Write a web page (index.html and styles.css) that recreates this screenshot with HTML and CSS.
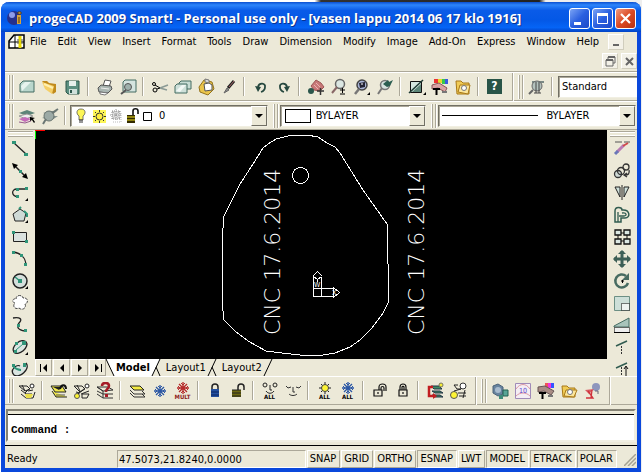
FILE: index.html
```html
<!DOCTYPE html>
<html lang="en">
<head>
    <meta charset="UTF-8">
    <meta name="viewport" content="width=device-width, initial-scale=1.0">
    <title>progeCAD 2009 Smart!</title>
    <link rel="stylesheet" href="styles.css">
</head>
<body>

<div class="window">
    <header class="titlebar">
        <svg class="app-icon" width="16" height="16"><circle cx="7" cy="8" r="7" fill="#26308c"/><circle cx="5" cy="5" r="3" fill="#8d9be8"/><path d="M10 5h4v9h-4z" fill="#d8a43a"/><path d="M11 2h3v2h-3zM12 7v6" stroke="#5b3a12" fill="#f4d27a"/></svg>
        <h1>progeCAD 2009 Smart! - Personal use only - [vasen lappu 2014 06 17 klo 1916]</h1>
        <div class="win-buttons">
            <button class="win-btn" aria-label="Minimize"><svg width="19" height="19"><path d="M4 13h7v3H4z" fill="#fff"/></svg></button>
            <button class="win-btn" aria-label="Maximize"><svg width="19" height="19"><path d="M4.500 5v9.500h10V5M4 5h11" fill="none" stroke="#fff"/><path d="M4 4h11v3H4z" fill="#fff"/></svg></button>
            <button class="win-btn win-close" aria-label="Close"><svg width="19" height="19"><path d="M5 5l9 9M14 5l-9 9" stroke="#fff" stroke-width="2.200"/></svg></button>
        </div>
    </header>

    <nav class="menubar">
        <div class="menu-row">
            <svg class="doc-icon" width="17" height="17"><path d="M1 15V8l5-6h10v13z" fill="#fff" stroke="#000" stroke-width="1.500"/><path d="M1 9h15M7 2v13" stroke="#000"/><path d="M12 3v12" stroke="#e8d800" stroke-width="3"/><path d="M10 6v5M14 6v5" stroke="#555"/></svg>
            <button>File</button>
            <button>Edit</button>
            <button>View</button>
            <button>Insert</button>
            <button>Format</button>
            <button>Tools</button>
            <button>Draw</button>
            <button>Dimension</button>
            <button>Modify</button>
            <button>Image</button>
            <button>Add-On</button>
            <button>Express</button>
            <button>Window</button>
            <button>Help</button>
            <button class="mdi" aria-label="Minimize drawing"><svg width="14" height="14"><path d="M4 9h6v2H4z" fill="#666"/></svg></button>
        </div>
        <div class="menu-row mdi-row">
            <button class="mdi" aria-label="Restore drawing"><svg width="14" height="14"><path d="M5 5V3h7v6h-2M3 6h7v6H3z" fill="none" stroke="#666"/><path d="M3 5h7v2H3zM5 2h7v2H5z" fill="#666"/></svg></button>
            <button class="mdi" aria-label="Close drawing"><svg width="14" height="14"><path d="M4 4l7 7M11 4l-7 7" stroke="#666" stroke-width="2"/></svg></button>
        </div>
    </nav>

    <!-- standard toolbar -->
    <div class="toolbar">
        <i class="grip"></i>
        <button class="tool" aria-label="New"><svg width="18" height="18"><path d="M2 14V6l3-3h11v11z" fill="#b9d6cc" stroke="#456c62"/><path d="M3 8l4-4h6L4 13z" fill="#e7f3ee"/></svg></button>
        <button class="tool" aria-label="Open"><svg width="18" height="18"><path d="M1 3h5l2 2 7 1v8l-3 2z" fill="#c08a1c"/><path d="M1 4l12 4-2 8L4 11z" fill="#f5cf67"/><path d="M3 6l9 4" stroke="#fff0b0" stroke-width="2"/></svg></button>
        <button class="tool" aria-label="Save"><svg width="18" height="18"><path d="M2 3h13v13H4l-2-2z" fill="#5b8f80" stroke="#2c574b"/><path d="M5 3h7v5H5z" fill="#e6efeb"/><path d="M5 11h8v5H5z" fill="#cfe0da"/><path d="M7 12v3" stroke="#2c574b" stroke-width="2"/></svg></button>
        <i class="sep"></i>
        <button class="tool" aria-label="Print"><svg width="18" height="18"><path d="M7 8l2-6 6 1-2 6z" fill="#fff" stroke="#555"/><path d="M2 10l3-3 10 1 1 3-4 4-9-1z" fill="#a9b5b1" stroke="#555"/><path d="M4 14l8 1-3 2-5-1z" fill="#fff" stroke="#777"/><path d="M5 10l8 1" stroke="#eee"/></svg></button>
        <button class="tool" aria-label="Print preview"><svg width="18" height="18"><path d="M4 13V4l2-2h11v12H4" fill="#d5e4df" stroke="#456c62"/><circle cx="9" cy="9" r="3.500" fill="#9fb1ac" stroke="#555"/><path d="M7 12l-5 4" stroke="#555" stroke-width="2"/></svg></button>
        <i class="sep"></i>
        <button class="tool" aria-label="Cut"><svg width="18" height="18" fill="none" stroke="#000"><circle cx="3" cy="6" r="1.500"/><circle cx="4" cy="12" r="2"/><path d="M4 7l5 3M6 11l3-1"/><path d="M9 10l8-3M9 10l7 2" stroke="#8b9a95" stroke-width="1.500"/></svg></button>
        <button class="tool" aria-label="Copy"><svg width="18" height="18"><path d="M5 11V5l2-2h10v8z" fill="#c7dcd4" stroke="#456c62"/><path d="M1 15V8l2-2h10v9z" fill="#cfe1da" stroke="#456c62"/><path d="M2 13l6-6h4l-6 7z" fill="#f2f8f5"/></svg></button>
        <button class="tool" aria-label="Paste"><svg width="18" height="18"><path d="M7 2l8 2 2 7-6 6-8-3-1-5z" fill="#eac44a" stroke="#94731c"/><path d="M7 6l5-1 3 2v5l-7 1z" fill="#fff" stroke="#555"/><path d="M8 1l4 1v3L8 4z" fill="#ddd" stroke="#777"/></svg></button>
        <button class="tool" aria-label="Match properties"><svg width="18" height="18"><path d="M4 15l3-5 2 2z" fill="#888" stroke="#666"/><path d="M8 10l6-7" stroke="#222" stroke-width="3"/><path d="M9 9l5-6" stroke="#a96a6a"/></svg></button>
        <i class="sep"></i>
        <button class="tool" aria-label="Undo"><svg width="18" height="18"><path d="M6 9c1-5 8-4 7 0 0 2-1 4-4 5" fill="none" stroke="#26483f" stroke-width="1.800"/><path d="M3 8l6 1-3 5z" fill="#26483f"/></svg></button>
        <button class="tool" aria-label="Redo"><svg width="18" height="18"><path d="M12 9c-1-5-8-4-7 0 0 2 1 4 4 5" fill="none" stroke="#26483f" stroke-width="1.800"/><path d="M15 8l-6 1 3 5z" fill="#26483f"/></svg></button>
        <i class="sep"></i>
        <button class="tool" aria-label="Pan"><svg width="18" height="18"><path d="M4 8l5-6 5 3 3 4-4 4-6-1z" fill="#c87878" stroke="#9c5555"/><path d="M9 5l4 4M7 7l4 4" stroke="#ecb0b0"/><circle cx="4" cy="13" r="3" fill="#2b564b"/><path d="M10 13h7M13.500 10v7" stroke="#333" stroke-width="1.500"/></svg></button>
        <button class="tool" aria-label="Zoom in and out"><svg width="18" height="18"><circle cx="10" cy="6" r="4.500" fill="#dbe6e2" stroke="#666" stroke-width="1.500"/><path d="M7 9l-5 6" stroke="#866" stroke-width="2"/><path d="M10 12h5M12.500 10v5M10 16h5" stroke="#000"/></svg></button>
        <button class="tool" aria-label="Zoom window"><svg width="18" height="18"><circle cx="9" cy="7" r="5" fill="#aab6d8" stroke="#444" stroke-width="1.500"/><path d="M6 5l6-1v5l-5 1z" fill="#223"/><path d="M8 6h2" stroke="#fff"/><path d="M6 11l-4 5" stroke="#777" stroke-width="2.500"/><path d="M17 14v3h-3z"/></svg></button>
        <button class="tool" aria-label="Zoom previous"><svg width="18" height="18"><circle cx="9" cy="7" r="4.500" fill="#d7e3df" stroke="#777" stroke-width="1.500"/><path d="M6 10l-4 6" stroke="#777" stroke-width="2"/><path d="M7 6l5-4 1 2 4-2-3 6-3 1z" fill="#2b5e50"/></svg></button>
        <i class="sep"></i>
        <button class="tool" aria-label="Redraw"><svg width="18" height="18"><path d="M2.500 3.500h11v11h-11z" fill="#d4e5df" stroke="#111"/><path d="M4 14l9-8v8z" fill="#5c8578"/><path d="M1 15L15 2" stroke="#1c3a33" stroke-width="1.500"/><path d="M18 14v3h-3z"/></svg></button>
        <button class="tool" aria-label="Properties"><svg width="18" height="18"><path d="M3 1h4v4H3z" fill="#e33"/><path d="M7 1h4v4H7z" fill="#e4d92e"/><path d="M11 1h3v5h-3z" fill="#36c84d"/><path d="M14 1h3v5h-3z" fill="#3a5be0"/><path d="M1 7l7-2 8 5-2 4-7-4-6 1z" fill="#d9a3a3" stroke="#855"/><path d="M2 11h7M5.500 11v6" stroke="#000" stroke-width="2"/><path d="M11 14h5" stroke="#777" stroke-width="2"/></svg></button>
        <button class="tool" aria-label="Explorer"><svg width="18" height="18"><path d="M2 3h5l2 2h6v11H3z" fill="#f0cb55" stroke="#a87918"/><path d="M4 14l2-7h10l-2 9z" fill="#fbe59a" stroke="#a87918"/><circle cx="10" cy="10" r="2.500" fill="#fff" stroke="#777"/></svg></button>
        <i class="sep"></i>
        <button class="tool help" aria-label="Help"><span>?</span></button>
        <i class="sep sep-end"></i>
        <i class="grip"></i>
        <button class="tool" aria-label="Text style"><svg width="18" height="18"><path d="M4 3h12v2H4z" fill="#7b8985"/><circle cx="9" cy="8" r="5" fill="#b4c2bd" stroke="#666"/><path d="M8 4v11M11 4v11" stroke="#444"/><path d="M6 15h7" stroke="#444"/><path d="M5 12l-4 4" stroke="#666" stroke-width="2"/></svg></button>
        <i class="sep"></i>
        <div class="combo combo-style">
            <select aria-label="Text style"><option>Standard</option></select>
        </div>
    </div>

    <!-- layer and entity properties -->
    <div class="toolbar">
        <i class="grip"></i>
        <button class="tool" aria-label="Layers"><svg width="18" height="18"><path d="M1 6l8-3 8 3-8 3z" fill="#5c8478"/><path d="M1 9l8-2 6 2-7 3z" fill="#eee" stroke="#999"/><path d="M1 12l6-2 6 2-6 3z" fill="#c46bb9"/><path d="M1 15l6 1 6-2" stroke="#965b8e" fill="none"/><path d="M12 10l5 1-2 1 2 3-1 1-2-3-2 1z"/></svg></button>
        <button class="tool" aria-label="Layer previous"><svg width="18" height="18"><path d="M2 6l6-2h8l-5 4zM1 11l5-2h11l-6 4z" fill="#84918d"/><circle cx="8" cy="9" r="5" fill="#9caaa6" stroke="#67736f"/><path d="M5 12l-3 5M11 6l6-4" stroke="#6b7774" stroke-width="2"/></svg></button>
        <i class="sep"></i>
        <div class="combo combo-layer">
            <svg width="88" height="18">
                <path d="M10 2c5 0 5 5 2 7v4H8V9C5 7 5 2 10 2z" fill="#fdf658" stroke="#555" stroke-width=".8"/><path d="M8 13h4M8 15h4" stroke="#333"/>
                <path d="M22 3h13v13H22z" fill="#fdf658"/><circle cx="28.500" cy="9.500" r="3.500" fill="#ffef3f" stroke="#333"/><path d="M28.500 3v2M28.500 14v2M22 9.500h2M33 9.500h2M24 5l1 1M33 5l-1 1M24 14l1-1M33 14l-1-1" stroke="#333"/>
                <path d="M41 4h8v8h-8z" fill="#ddd" stroke="#888" stroke-dasharray="1 1"/><path d="M45 2v12M39 8h12M41 4l8 8M49 4l-8 8" stroke="#999" stroke-dasharray="1 1"/><path d="M50 6v9h-9" fill="none" stroke="#bbb" stroke-dasharray="1 1"/>
                <path d="M56 8h8v8h-8z" fill="#332b00"/><path d="M56 10h8M56 13h8" stroke="#f0e020"/><path d="M62 8V4c0-3 5-3 5 0v3" fill="none" stroke="#111" stroke-width="1.600"/>
                <path d="M72.500 5.500h8v8h-8z" fill="#fff" stroke="#000"/>
            </svg>
            <select aria-label="Layer"><option>0</option></select>
            <span class="arrow"></span>
        </div>
        <i class="grip"></i>
        <div class="combo combo-color">
            <span class="swatch"></span>
            <select aria-label="Colour"><option>BYLAYER</option></select>
            <span class="arrow"></span>
        </div>
        <i class="grip"></i>
        <div class="combo combo-line">
            <span class="linetype"></span>
            <select aria-label="Linetype"><option>BYLAYER</option></select>
            <span class="arrow"></span>
        </div>
    </div>

    <main class="workspace">
        <div class="side">
            <i class="grip-h"></i>
            <button class="tool" aria-label="Line"><svg width="18" height="18"><path d="M3 3l12 11" stroke="#222" stroke-width="1.300"/><path d="M1 1h4v3H1zM13 13h4v3h-4z" fill="#2f9579"/></svg></button>
            <button class="tool" aria-label="Infinite line"><svg width="18" height="18"><path d="M3 3l12 12" stroke="#222" stroke-width="1.500"/><path d="M1 1l6 2-4 4zM17 17l-6-2 4-4z"/><path d="M8 8h3v3H8z" fill="#2f9579"/></svg></button>
            <button class="tool" aria-label="Polyline"><svg width="18" height="18"><path d="M16 5H6c-6 0-6 7 1 8" fill="none" stroke="#222" stroke-width="1.300"/><path d="M14 3h3v3h-3zM5 4h3v3H5zM5 11h3v3H5z" fill="#2f9579"/><path d="M17 14v3h-3z"/></svg></button>
            <button class="tool" aria-label="Polygon"><svg width="18" height="18"><path d="M9 3l6 4-2 8H4L2 8z" fill="#cfdad6" stroke="#222"/><path d="M8 3l2-2M13 5l3 3v3" stroke="#2f9579" stroke-width="2" fill="none"/><path d="M17 14v3h-3z"/></svg></button>
            <button class="tool" aria-label="Rectangle"><svg width="18" height="18"><path d="M2.500 4.500h13v9h-13z" fill="#dbe2df" stroke="#222"/><path d="M1 3h3v3H1zM14 12h3v3h-3z" fill="#2f9579"/></svg></button>
            <button class="tool" aria-label="Arc"><svg width="18" height="18"><path d="M2 2c8 1 13 6 13 14" fill="none" stroke="#222" stroke-width="1.300"/><path d="M1 1h3v3H1zM9 4h3v3H9zM13 13h3v3h-3z" fill="#2f9579"/></svg></button>
            <button class="tool" aria-label="Circle"><svg width="18" height="18"><circle cx="9" cy="9" r="7" fill="#d5dfdb" stroke="#222" stroke-width="1.500"/><path d="M4 5l5 4" stroke="#2f9579" stroke-width="1.500"/><path d="M7 7h4v4H7z" fill="#2f9579"/><path d="M17 14v3h-3z"/></svg></button>
            <button class="tool" aria-label="Revision cloud"><svg width="18" height="18"><path d="M5 5c0-5 7-4 7-1 5-1 6 5 2 6 2 4-3 7-6 4-4 2-7-2-4-5-4-1-2-5 1-4z" fill="#fff" stroke="#444" stroke-dasharray="3 1"/></svg></button>
            <button class="tool" aria-label="Spline"><svg width="18" height="18"><path d="M2 2c7-1 10 1 6 5-3 4-1 7 6 8" fill="none" stroke="#222" stroke-width="1.300"/><path d="M6 8h3v3H6zM13 13h3v3h-3z" fill="#2f9579"/></svg></button>
            <button class="tool" aria-label="Ellipse"><svg width="18" height="18"><ellipse cx="9" cy="9" rx="8" ry="5" transform="rotate(-40 9 9)" fill="#dae5e1" stroke="#222" stroke-width="1.300"/><path d="M5 12l7-6" stroke="#2f9579"/><path d="M4 4h3v3H4zM11 3h4v4h-4zM3 12h3v3H3z" fill="#2f9579"/><path d="M17 14v3h-3z"/></svg></button>
            <button class="tool" aria-label="Elliptical arc"><svg width="18" height="18"><path d="M15 3c5 6-7 16-12 12-5-5 3-11 6-9" fill="#dae5e1" stroke="#222" stroke-width="1.300"/><path d="M2 6c2 2 3 4 8 4" stroke="#2f9579" stroke-width="2" fill="none"/><path d="M1 4h3v3H1zM12 3h3v4h-3z" fill="#2f9579"/></svg></button>
        </div>

        <section class="drawing">
            <svg class="canvas" viewBox="0 0 572 229" preserveAspectRatio="xMinYMin meet" role="img" aria-label="Drawing">
                <path d="M.500 0v9" stroke="#0f0"/>
                <path d="M0 .500h10" stroke="#f00"/>
                <g fill="none" stroke="#fff" stroke-width="1" shape-rendering="crispEdges">
                    <path d="M253 6l7-1h12l11 2 9 6 8 4 5 6 23 37 24 34v38l1 2v39l-5 10-11 15-12 12-10 7-15 6-18 3-17-1-18-2-16-2-18-10-13-10-11-11-2-19 1-10-1-27v-28l1-8v-10l4-8 13-26 13-20 10-16 5-4 8-5z"/>
                    <circle cx="265.500" cy="45.500" r="8"/>
                    <path d="M278.500 158.500h8v8h-8zM286.500 158.500h12v8h-12M278.500 158.500v-12M286.500 158.500v-12M277.500 146.500l5-5 5 5M298.500 157.500l6 5-6 5M278.500 146.500l4 3 4-3M282.500 149v3"/>
                </g>
                <g class="ucs">
                    <text x="279" y="157">W</text>
                    <text x="297" y="165">X</text>
                </g>
                <g class="cad-text">
                    <text transform="translate(245 205) rotate(-90)">CNC 17.6.2014</text>
                    <text transform="translate(389 205) rotate(-90)">CNC 17.6.2014</text>
                </g>
            </svg>
            <div class="tabs">
                <button class="nav" aria-label="First layout"><svg width="12" height="12"><path d="M2 2h1v8H2zM9 2v8L5 6z"/></svg></button>
                <button class="nav" aria-label="Previous layout"><svg width="12" height="12"><path d="M8 2v8L4 6z"/></svg></button>
                <button class="nav" aria-label="Next layout"><svg width="12" height="12"><path d="M4 2v8l4-4z"/></svg></button>
                <button class="nav" aria-label="Last layout"><svg width="12" height="12"><path d="M9 2h1v8H9zM3 2v8l4-4z"/></svg></button>
                <svg width="10" height="17"><path d="M1 0h9v17H9z" fill="#fff"/><path d="M1 0l8 17" stroke="#000"/></svg>
                <button class="tab active">Model</button>
                <svg width="14" height="17"><path d="M0 0h9L1 17H0z" fill="#fff"/><path d="M9 0L1 17M5 8l4 9" stroke="#000"/></svg>
                <button class="tab">Layout1</button>
                <svg width="14" height="17"><path d="M9 0L1 17M5 8l4 9" stroke="#000"/></svg>
                <button class="tab">Layout2</button>
                <svg width="14" height="17"><path d="M9 0L1 17" stroke="#000"/></svg>
            </div>
        </section>

        <div class="side">
            <i class="grip-h"></i>
            <button class="tool" aria-label="Erase"><svg width="18" height="18"><path d="M2 2h15" stroke="#555" stroke-dasharray="7 2"/><path d="M4 12l7-7" stroke="#b87bb4" stroke-width="3"/><path d="M10 6l5-3" stroke="#d04a4a" stroke-width="2"/><path d="M2 14l3-3" stroke="#6a77b8" stroke-width="3"/></svg></button>
            <button class="tool" aria-label="Copy entity"><svg width="18" height="18" fill="none" stroke="#333" stroke-width="1.300"><circle cx="5" cy="12" r="3.500" fill="#cfdad6"/><circle cx="8" cy="9" r="3.500"/><circle cx="13" cy="5" r="3"/><path d="M16 8c1 4-1 5-4 5M14 11l-3 2 3 2"/></svg></button>
            <button class="tool" aria-label="Mirror"><svg width="18" height="18"><path d="M2 3l5 10V3zM16 3l-5 10V3z" fill="#cfe0da" stroke="#222"/><path d="M9 1v15" stroke="#222"/></svg></button>
            <button class="tool" aria-label="Offset"><svg width="18" height="18" fill="none"><path d="M2 16V5c0-5 7-4 7-1 8-1 9 8 3 8H8v4z" stroke="#315c50" stroke-width="1.500"/><path d="M5 16V6M9 7c5-1 5 3 2 3H6" stroke="#315c50" stroke-width="1.300"/></svg></button>
            <button class="tool" aria-label="Array"><svg width="18" height="18"><path d="M2 2h6v5H2zM11 2h6v5h-6zM2 11h6v5H2zM11 11h6v5h-6z" fill="#dce8e4" stroke="#111" stroke-width="1.300"/><path d="M8 5h3M8 13h3M5 7v4M14 7v4" stroke="#111"/></svg></button>
            <button class="tool" aria-label="Move"><svg width="18" height="18"><path d="M9 1v16M1 9h16" stroke="#3c5f56" stroke-width="3"/><path d="M9 0l4 4H5zM9 18l-4-4h8zM0 9l4-4v8zM18 9l-4 4V5z" fill="#3c5f56"/></svg></button>
            <button class="tool" aria-label="Rotate"><svg width="18" height="18"><path d="M13 4a6.500 6.500 0 1 0 2 7" fill="none" stroke="#476b61" stroke-width="2.500"/><path d="M16 1v7H9z" fill="#476b61"/><path d="M8 9h3M9.500 8v3" stroke="#000"/></svg></button>
            <button class="tool" aria-label="Scale"><svg width="18" height="18"><path d="M1.500 2.500h15v14h-15z" fill="#cddfd8" stroke="#6c8f84"/><path d="M8.500 9.500h8v7h-8z" fill="#eef4f1" stroke="#000" stroke-dasharray="1 1"/></svg></button>
            <button class="tool" aria-label="Stretch"><svg width="18" height="18"><path d="M1 10l15-8v9H1z" fill="#a9c4bb" stroke="#456c62"/><path d="M1.500 11.500h15v5h-15z" fill="#eee" stroke="#000" stroke-dasharray="1 1"/><path d="M1 16.500h16" stroke="#000"/></svg></button>
            <button class="tool" aria-label="Trim"><svg width="18" height="18"><path d="M3 8l11-5" stroke="#315c50" stroke-width="1.500"/><path d="M8.500 8v8" stroke="#333" stroke-dasharray="2 1"/></svg></button>
            <button class="tool" aria-label="Extend"><svg width="18" height="18"><path d="M3 8l11-5" stroke="#315c50" stroke-width="1.500"/><path d="M8.500 7v10" stroke="#333" stroke-dasharray="2 1"/><path d="M13 7v9M11 9l2-3 2 3" stroke="#111" fill="none"/></svg></button>
        </div>
    </main>

    <!-- layer tools -->
    <div class="toolbar">
        <i class="grip"></i>
        <button class="tool" aria-label="Set layer by entity"><svg width="18" height="18"><path d="M1 4h8l3 3-5 2zM3 8l5 4h6M3 12l5 4h7l2-6" fill="none" stroke="#222"/><path d="M7 12h8l-2 4H8z" fill="#e9df48"/><circle cx="14" cy="4" r="2" fill="#fff" stroke="#222"/><path d="M12 6l-5 5M4 3l3 6M10 9l5-1" stroke="#222"/></svg></button>
        <i class="sep"></i>
        <button class="tool" aria-label="Previous layer"><svg width="18" height="18"><path d="M1 4h11l4 6H5zM2 9l4 6h11" fill="#f1e94c" stroke="#222"/><path d="M3 5h9l-3 3z" fill="#222"/><path d="M10 7c1-5 6-5 6 0" stroke="#111" stroke-width="2" fill="none"/><path d="M6 13h9" stroke="#555"/></svg></button>
        <button class="tool" aria-label="Change layer"><svg width="18" height="18"><path d="M1 4h8l3 3-5 3zM9 12h7l-2 4H9zM3 10l4 1" fill="none" stroke="#222"/><circle cx="14" cy="4" r="2" fill="#fff" stroke="#222"/><circle cx="4" cy="14" r="2.500" fill="#fdf435" stroke="#555"/><path d="M12 6l-7 6M4 3l3 6M8 12l8-3" stroke="#222"/></svg></button>
        <button class="tool" aria-label="Layer query"><svg width="18" height="18"><path d="M1 5h11l5 3-10 1zM1 9l6 3h10M1 12l6 4h10M1 5l6 4M7 9v7" fill="none" stroke="#333"/><path d="M6 4c0-4 7-4 7 0 0 3-3 2-3 6" fill="none" stroke="#a51b27" stroke-width="2.500"/><path d="M9 12h3v3H9z" fill="#a51b27"/></svg></button>
        <i class="sep"></i>
        <button class="tool" aria-label="Isolate layer"><svg width="18" height="18"><path d="M2 4h10l4 4H6z" fill="#f3eb45" stroke="#222"/><path d="M2 8l4 4h11l-3-3M2 11l4 4h11l-3-3" fill="none" stroke="#333"/></svg></button>
        <button class="tool" aria-label="Freeze layer"><svg width="18" height="18" stroke="#2a56a4"><path d="M9 3v12M3 9h12M5 5l8 8M13 5l-8 8" stroke-width="1.300"/><path d="M7 4l2 2 2-2M7 14l2-2 2 2M4 7l2 2-2 2M14 7l-2 2 2 2" fill="none"/></svg></button>
        <button class="tool stacked" aria-label="Freeze multiple"><svg width="18" height="12" stroke="#b52a2a"><path d="M9 0v12M3 6h12M5 2l8 8M13 2l-8 8" stroke-width="1.300"/><path d="M7 1l2 2 2-2M7 11l2-2 2 2M4 4l2 2-2 2M14 4l-2 2 2 2" fill="none"/></svg><small class="red">MULT</small></button>
        <i class="sep"></i>
        <button class="tool" aria-label="Lock layer"><svg width="18" height="18"><path d="M6 8V5c0-4 6-4 6 0v3" fill="none" stroke="#222" stroke-width="1.500"/><path d="M5 7h8v8H5z" fill="#234f9f"/><path d="M5 10h8M5 13h8" stroke="#0a2560"/></svg></button>
        <button class="tool" aria-label="Unlock layer"><svg width="18" height="18"><path d="M9 8V5c0-4 6-4 6 0v3" fill="none" stroke="#222" stroke-width="1.500"/><path d="M3 8h9v7H3z" fill="#6d6810"/><path d="M3 8h9M3 11h9M3 14h9" stroke="#222"/></svg></button>
        <i class="sep"></i>
        <button class="tool stacked" aria-label="All layers on"><svg width="18" height="12" fill="none" stroke="#222"><circle cx="4" cy="3" r="2"/><circle cx="14" cy="3" r="2"/><path d="M9 3v5h2M5 9c2 3 6 3 8 0"/></svg><small>ALL</small></button>
        <button class="tool" aria-label="Layer off"><svg width="18" height="18" fill="none" stroke="#333"><path d="M2 4l2 2 3-1M12 5l3 1 2-2M9 5v5h2M5 12c2 2 6 2 8 0" stroke-width="1"/></svg></button>
        <i class="sep"></i>
        <button class="tool stacked" aria-label="Thaw all"><svg width="18" height="12"><path d="M9 0v12M3 6h12M5 2l8 8M13 2l-8 8" stroke="#222"/><circle cx="9" cy="6" r="3.500" fill="#fdf435" stroke="#444"/></svg><small>ALL</small></button>
        <button class="tool stacked" aria-label="Freeze all"><svg width="18" height="12" stroke="#2a56a4"><path d="M9 0v12M3 6h12M5 2l8 8M13 2l-8 8" stroke-width="1.300"/><path d="M7 1l2 2 2-2M7 11l2-2 2 2M4 4l2 2-2 2M14 4l-2 2 2 2" fill="none"/></svg><small>ALL</small></button>
        <i class="sep"></i>
        <button class="tool" aria-label="Unlock all"><svg width="18" height="18" fill="none" stroke="#111"><path d="M3 8h8v6H3zM8 8V5c0-4 7-4 7 0v4M10 8V6c0-2 3-2 3 0v3M7 10v2" stroke-width="1.200"/></svg></button>
        <button class="tool" aria-label="Lock all"><svg width="18" height="18" fill="none" stroke="#111"><path d="M5 8h8v6H5zM6 8V5c0-4 6-4 6 0v3M8 8V5c0-1 2-1 2 0v3M9 10v2" stroke-width="1.200"/></svg></button>
        <i class="sep"></i>
        <button class="tool" aria-label="Merge layers"><svg width="18" height="18"><path d="M5 4h8l3 3H8zM6 9h8l3 2H9zM6 13h8l3 2H8z" fill="#3e8b64" stroke="#234"/><path d="M7 5H3v9h5" fill="none" stroke="#c11d20" stroke-width="2.500"/><path d="M7 11l4 3-4 3z" fill="#c11d20"/><circle cx="15" cy="3" r="2" fill="#f5ec36" stroke="#776"/></svg></button>
        <button class="tool" aria-label="Copy to layer"><svg width="18" height="18"><circle cx="14" cy="4" r="3" fill="#fff" stroke="#333"/><circle cx="5" cy="13" r="3.500" fill="#fdf435" stroke="#555"/><path d="M5 3l3 4h4L5 9M9 11h8M10 14h7M5 3h4M16 8l-2 8" fill="none" stroke="#222"/></svg></button>
        <i class="sep sep-end"></i>
        <i class="grip"></i>
        <button class="tool" aria-label="Visual style"><svg width="18" height="18"><path d="M2 4l5-2 5 3v7l-5 2-5-3z" fill="#68849f" stroke="#4c6379"/><circle cx="7" cy="8" r="3" fill="#a9bccf"/><path d="M12 8h5v6h-5z" fill="#58a596" stroke="#235e51"/><path d="M8 13h4v4H8z" fill="#3f8c7b"/></svg></button>
        <button class="tool" aria-label="Limits"><svg width="18" height="18"><path d="M1.500 1.500h15v15h-15z" fill="#f4eef4" stroke="#a08bb8"/><path d="M2 7c4-6 10-6 14 0M2 14c4-4 10-4 14 0" fill="none" stroke="#dc9aa4"/><text class="ten" x="5" y="11">10</text></svg></button>
        <button class="tool" aria-label="Match"><svg width="18" height="18"><path d="M11 1h3v5h-3z" fill="#e3d"/><path d="M14 1h3v5h-3z" fill="#35f"/><path d="M8 1h3v4H8z" fill="#e55"/><path d="M1 5l7-1 9 5-3 4-7-4-6 1z" fill="#a98d85" stroke="#655"/><path d="M2 11h7M5.500 11v6" stroke="#000" stroke-width="2"/><path d="M11 14h5" stroke="#777" stroke-width="2"/></svg></button>
        <button class="tool" aria-label="Browse"><svg width="18" height="18"><path d="M2 4h5l2 2h6v9H3z" fill="#f0cb55" stroke="#a87918"/><path d="M4 14l2-6h11l-3 7z" fill="#fbe59a" stroke="#a87918"/><circle cx="10" cy="10" r="2.500" fill="#fff" stroke="#777"/></svg></button>
        <button class="tool" aria-label="Render"><svg width="18" height="18"><circle cx="13" cy="5" r="4" fill="#8e96bd"/><path d="M2 8l9-1-5 5z" fill="#d75b62"/><path d="M5 9l5 7H3M9 8l-1 8" stroke="#d0323c" fill="none" stroke-width="1.300"/><path d="M12 9h3v3" stroke="#667" fill="none"/></svg></button>
        <i class="sep sep-end"></i>
    </div>

    <div class="command">
        <div class="command-box">
            <label for="command">Command :</label>
            <input id="command" type="text">
        </div>
    </div>

    <footer class="statusbar">
        <span class="ready">Ready</span>
        <span class="coords">47.5073,21.8240,0.0000</span>
        <button class="status">SNAP</button>
        <button class="status">GRID</button>
        <button class="status">ORTHO</button>
        <button class="status on">ESNAP</button>
        <button class="status">LWT</button>
        <button class="status on">MODEL</button>
        <button class="status on">ETRACK</button>
        <button class="status on">POLAR</button>
        <svg class="resize" width="12" height="12"><path d="M0 12L12 0M4 12l8-8M8 12l4-4" stroke="#a5a292" stroke-width="1.500"/></svg>
    </footer>
</div>

</body>
</html>
```

FILE: styles.css
```css
* {
    box-sizing: border-box;
}
body {
    margin: 0;
    padding: 2px 1px 0;
    min-height: 100vh;
    display: flex;
    background: linear-gradient(90deg, #fff 49%, #333 50%, #222 84%, #eee 85%);
    font-family: "DejaVu Sans Condensed", "DejaVu Sans", sans-serif;
    font-size: 11px;
    color: #000;
}
button, select, input {
    font: inherit;
    color: inherit;
    margin: 0;
    padding: 0;
    border: none;
    border-radius: 0;
    background: none;
}
svg {
    display: block;
    flex: none;
}
.window {
    flex: 1;
    min-width: 0;
    display: flex;
    flex-direction: column;
    border: 4px solid #0a48dc;
    border-top: none;
    border-radius: 8px 8px 0 0;
    background: #ece9d8;
}

/* title bar */
.titlebar {
    display: flex;
    align-items: center;
    height: 30px;
    margin: 0 -4px;
    padding: 2px 5px 0 6px;
    border-radius: 8px 8px 0 0;
    background: linear-gradient(#0b4fd0, #2d85fb 10%, #0a5be8 28%, #0458e6 60%, #0564f6 85%, #0343c4);
}
.titlebar h1 {
    flex: 1;
    margin: 0 0 0 6px;
    font-family: "Open Sans", "Noto Sans", sans-serif;
    font-size: 13px;
    font-weight: bold;
    line-height: 20px;
    white-space: nowrap;
    color: #fff;
    text-shadow: 1px 1px #0a3290;
}
.win-buttons {
    display: flex;
    gap: 2px;
}
.win-btn {
    width: 21px;
    height: 21px;
    border: 1px solid #fff;
    border-radius: 3px;
    background: linear-gradient(135deg, #7ba4f5, #2b60e0 50%, #1c49c8);
}
.win-close {
    background: linear-gradient(135deg, #f09a80, #dc4a24 50%, #b8320f);
}

/* menu */
.menubar {
    border-bottom: 1px solid #aca899;
}
.menu-row {
    display: flex;
    align-items: center;
    height: 19px;
    padding-left: 3px;
}
.menu-row button {
    padding: 0 6px 0 5px;
    white-space: nowrap;
}
.menu-row .mdi {
    width: 16px;
    height: 16px;
    margin-left: 3px;
    padding: 0;
    border: 1px solid #fff;
    border-right-color: #d0cdbd;
    border-bottom-color: #d0cdbd;
    background: #f3f1e8;
}
.menu-row.mdi-row {
    justify-content: flex-end;
    height: 20px;
}

/* toolbars */
.toolbar {
    display: flex;
    align-items: center;
    height: 29px;
    padding-left: 3px;
    border-top: 1px solid #fff;
    border-bottom: 1px solid #aca899;
}
.tool {
    flex: none;
    display: flex;
    align-items: center;
    justify-content: center;
    width: 23px;
    height: 22px;
}
.grip {
    flex: none;
    width: 6px;
    height: 24px;
    margin-right: 1px;
    border: solid #fff;
    border-width: 0 1px;
    background: linear-gradient(90deg, #aca899 1px, #ece9d8 1px, #ece9d8 3px, #aca899 3px);
}
.grip-h {
    flex: none;
    width: 25px;
    height: 6px;
    margin: 1px 0;
    border: solid #aca899;
    border-width: 1px 0;
    background: linear-gradient(#fff 1px, #ece9d8 1px, #ece9d8 3px, #fff 3px);
}
.sep {
    flex: none;
    width: 2px;
    height: 19px;
    margin: 0 4px 0 3px;
    background: linear-gradient(90deg, #aca899 1px, #fff 1px);
}
.sep-end {
    height: 28px;
    margin: 0 4px 0 6px;
}
.help span {
    width: 15px;
    height: 15px;
    background: #285447;
    color: #fff;
    font-size: 12px;
    font-weight: bold;
    line-height: 15px;
}
.stacked {
    flex-direction: column;
}
.stacked small {
    font-size: 6px;
    font-weight: bold;
    line-height: 6px;
}
.stacked .red {
    color: #8c1a1a;
}
.ten {
    font-size: 7px;
    fill: #5a3fd0;
}

.combo {
    display: flex;
    align-items: center;
    height: 22px;
    border: 1px solid;
    border-color: #716f64 #f1efe2 #f1efe2 #716f64;
    box-shadow: inset 1px 1px #aca899;
    background: #fff;
}
.combo select {
    flex: 1;
    min-width: 0;
    height: 18px;
    appearance: none;
}
.combo + .grip {
    margin-left: 5px;
}
.combo-style {
    flex: 1;
    margin-left: 1px;
    border-right: none;
    padding-left: 3px;
}
.combo-layer {
    flex: 4 1 50px;
}
.combo-color {
    flex: 3 1 36px;
    padding-left: 4px;
}
.combo-line {
    flex: 4 1 50px;
    padding-left: 3px;
    margin-right: 1px;
}
.swatch {
    width: 26px;
    height: 14px;
    margin-right: 5px;
    border: 1px solid #000;
}
.linetype {
    flex: none;
    width: 96px;
    margin-right: 8px;
    border-top: 1px solid #000;
}
.arrow {
    display: flex;
    align-items: center;
    justify-content: center;
    width: 16px;
    height: 20px;
    border: 1px solid;
    border-color: #fff #716f64 #716f64 #fff;
    background: #ece9d8;
    pointer-events: none;
}
.arrow::after {
    content: "";
    border: 4px solid transparent;
    border-top-color: #000;
    border-bottom: none;
}

/* drawing area */
.workspace {
    flex: 1;
    display: flex;
    min-height: 246px;
}
.side {
    display: flex;
    flex-direction: column;
    align-items: center;
    width: 30px;
    height: 246px;
    overflow: hidden;
}
.drawing {
    flex: 1;
    min-width: 0;
    display: flex;
    flex-direction: column;
}
.canvas {
    flex: 1;
    width: 100%;
    min-height: 0;
    background: #000;
}
.cad-text {
    font-family: "DejaVu Sans Light", "DejaVu Sans", sans-serif;
    font-size: 22px;
    font-weight: 200;
    fill: #fff;
}
.ucs {
    font-size: 7px;
    fill: #fff;
}
.tabs {
    display: flex;
    height: 17px;
}
.nav {
    display: flex;
    align-items: center;
    justify-content: center;
    width: 17px;
    margin-right: 1px;
    border: 1px solid;
    border-color: #fff #aca899 #aca899 #fff;
}
.nav + svg {
    margin-left: -2px;
}
.tab {
    padding: 0 1px;
    line-height: 16px;
}
.tab.active {
    background: #fff;
    font-weight: bold;
}

/* command line */
.command {
    padding: 4px 1px 3px;
    border-bottom: 1px solid #000;
}
.command-box {
    display: flex;
    align-items: center;
    height: 33px;
    padding: 8px 3px 0;
    border: 2px solid;
    border-color: #858274 #f1efe2 #f1efe2 #858274;
    background: linear-gradient(#ece9d8 3px, #000 3px, #000 4px, #fff 4px);
    font-family: "Liberation Mono", monospace;
    font-weight: bold;
}
.command-box input {
    flex: 1;
    min-width: 0;
    height: 18px;
    margin-left: 7px;
    outline: none;
}

/* status bar */
.statusbar {
    display: flex;
    align-items: center;
    gap: 1px;
    height: 22px;
    padding: 3px 1px 0 2px;
}
.ready {
    width: 109px;
}
.coords {
    flex: 1;
    height: 18px;
    padding: 0 1px;
    border: 1px solid;
    border-color: #aca899 #fff #fff #aca899;
    line-height: 17px;
}
.status {
    height: 18px;
    padding: 0 3px 0 2px;
    border: 1px solid;
    border-color: #fff #aca899 #aca899 #fff;
    line-height: 16px;
}
.status.on {
    border-color: #aca899 #fff #fff #aca899;
}
.resize {
    align-self: flex-end;
    margin: 0 0 2px 6px;
}
```
